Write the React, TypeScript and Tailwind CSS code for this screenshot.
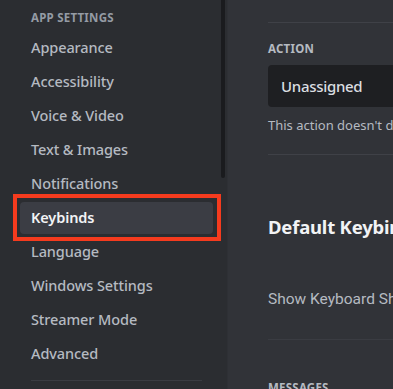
const items = [
  "Appearance",
  "Accessibility",
  "Voice & Video",
  "Text & Images",
  "Notifications",
  "Keybinds",
  "Language",
  "Windows Settings",
  "Streamer Mode",
  "Advanced",
];

const App = () => {
  return (
    <div
      className="relative flex w-[393px] h-[389px] overflow-hidden bg-[#313338]"
      style={{ fontFamily: '"Noto Sans", "Open Sans", sans-serif' }}
    >
      {/* sidebar */}
      <div className="flex w-[227px] shrink-0 bg-[#2b2d31]">
        <nav className="flex-1 pl-[20px] pr-[8px] pt-[10px]">
          <h2 className="px-[11px] h-[16px] text-[11.5px] leading-[16px] font-bold uppercase tracking-[0.02em] text-[#949ba4] mb-[6px]">
            App Settings
          </h2>
          <ul className="flex flex-col gap-[2px]">
            {items.map((item) => (
              <li
                key={item}
                className={
                  item === "Keybinds"
                    ? "h-[32px] px-[11px] flex items-center rounded-[4px] bg-[#3b3d44] text-[14.5px] font-semibold tracking-[-0.1px] text-[#f2f3f5] whitespace-nowrap"
                    : "h-[32px] px-[11px] flex items-center rounded-[4px] text-[14.5px] font-medium tracking-[-0.1px] text-[#b5bac1] whitespace-nowrap"
                }
              >
                {item}
              </li>
            ))}
          </ul>
          <div className="mt-[10px] mx-[11px] h-px bg-[#3a3c42]" />
        </nav>
        <div className="w-[4px] mr-[2px]">
          <div className="h-[178px] w-full rounded-b-[2px] bg-[#1a1b1e]" />
        </div>
      </div>

      {/* main */}
      <main className="flex-1 min-w-0 pl-[40px] pt-[22px] border-l border-[#2e3035] whitespace-nowrap">
        <div className="h-px bg-[#3f4147]" />
        <h3 className="mt-[18px] text-[11.5px] leading-[16px] font-bold uppercase tracking-[0.02em] text-[#b5bac1]">
          Action
        </h3>
        <div className="mt-[8px] h-[42px] rounded-l-[4px] bg-[#1e1f22] pl-[13px] flex items-center text-[15px] font-medium tracking-[-0.3px] text-[#dbdee1]">
          Unassigned
        </div>
        <p className="mt-[9px] text-[13px] leading-[18px] text-[#b5bac1]">
          This action doesn't do anything
        </p>
        <div className="mt-[20px] h-px bg-[#3f4147]" />
        <h2 className="mt-[59px] text-[18.5px] leading-[26px] font-bold tracking-[-0.2px] text-[#f2f3f5]">
          Default Keybinds
        </h2>
        <div
          className="mt-[49px] text-[15.5px] leading-[20px] text-[#b5bac1]"
          style={{ fontFamily: "Roboto, sans-serif" }}
        >
          Show Keyboard Shortcuts
        </div>
        <div className="mt-[30px] h-px bg-[#3a3c42]" />
        <h3 className="mt-[40px] text-[11.5px] leading-[16px] font-bold uppercase tracking-[0.02em] text-[#b5bac1]">
          Messages
        </h3>
      </main>

      {/* highlight annotation */}
      <div className="absolute left-[13px] top-[194px] w-[208px] h-[47px] border-4 border-[#f53b1e]" />
    </div>
  );
};

export default App;
